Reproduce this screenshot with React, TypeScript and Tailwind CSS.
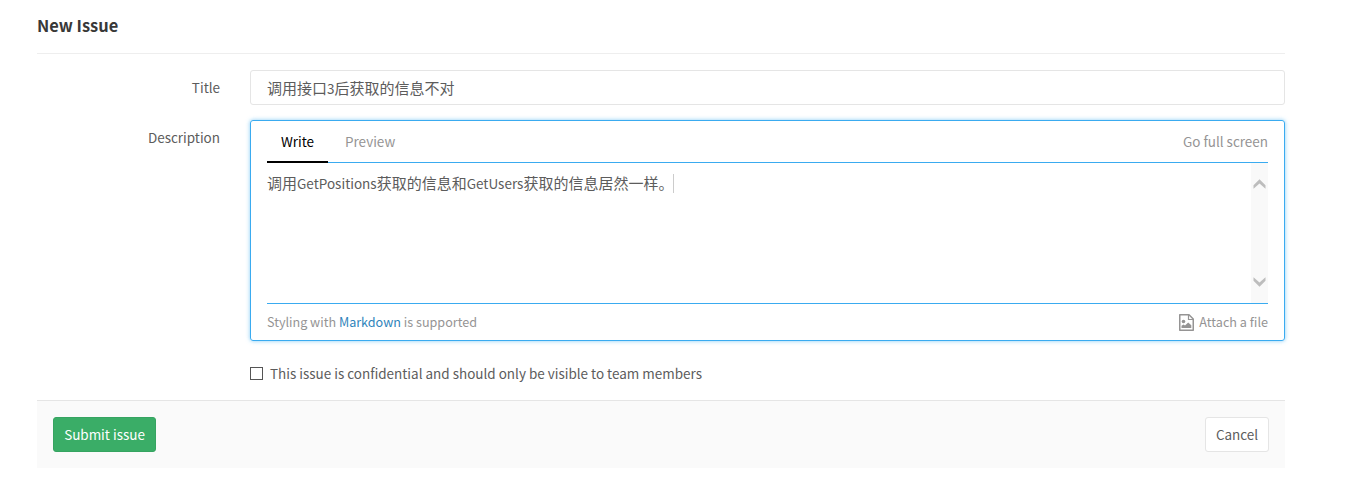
import { useState, type ReactNode } from 'react';

function Latin({ children }: { children: ReactNode }) {
  return <span className="text-[13.5px]">{children}</span>;
}

function Chevron({ down = false }: { down?: boolean }) {
  return (
    <svg width="13" height="10" viewBox="0 0 13 10" className={down ? 'rotate-180' : ''}>
      <path d="M0.5 6.3 L6.5 0.3 L12.5 6.3 V9.7 L6.5 4.6 L0.5 9.7 Z" fill="#bdbdbd" />
    </svg>
  );
}

function FileImageIcon() {
  return (
    <svg width="15" height="17" viewBox="0 0 15 17" fill="none">
      <path d="M0.75 0.75 H10 L14.25 5 V16.25 H0.75 Z" stroke="#959494" strokeWidth="1.5" strokeLinejoin="round" />
      <path d="M9.5 1 V5.5 H14" stroke="#959494" strokeWidth="1.2" />
      <circle cx="4.5" cy="7.5" r="1.8" fill="#959494" />
      <path d="M2.5 14 V11.8 L4.5 10.4 L6 11.4 L9.2 8.4 L12.3 11.3 V14 Z" fill="#959494" />
    </svg>
  );
}

export default function App() {
  const [confidential, setConfidential] = useState(false);
  return (
    <main className="h-[504px] w-[1347px] bg-white pl-[37px] font-['Noto_Sans_CJK_SC',sans-serif] text-[13.47px] leading-5 text-[#5c5c5c]">
      <form className="w-[1248px]" onSubmit={(e) => e.preventDefault()}>
        <h3 className="h-[54px] border-b border-[#eeeeee] pt-[15px] text-[16.4px] leading-5 font-bold text-[#383838]">New Issue</h3>

        <div className="mt-4 flex">
          <label className="w-[183px] pt-[7px] text-right">Title</label>
          <div className="ml-[30px] h-[35px] flex-1 rounded-[3px] border border-[#e5e5e5] px-4 text-[15px] leading-[33px]">
            调用接口<Latin>3</Latin>后获取的信息不对
          </div>
        </div>

        <div className="mt-[15px] flex">
          <label className="w-[183px] pt-[7px] text-right">Description</label>
          <div className="ml-[30px] h-[221px] flex-1 rounded-[3px] border border-[#3aabf0] px-4 shadow-[0_0_4px_rgba(58,171,240,0.6)]">
            <div className="flex h-[42px] justify-between border-b border-[#3aabf0]">
              <div className="flex">
                <button type="button" className="h-[42px] w-[61px] border-b-2 border-black text-black">Write</button>
                <button type="button" className="ml-[17px] h-[42px] pb-[2px] text-[#959494]">Preview</button>
              </div>
              <button type="button" className="h-[42px] pb-[2px] text-[#959494]">Go full screen</button>
            </div>
            <div className="flex h-[141px] justify-between border-b border-[#3aabf0]">
              <div className="flex h-5 pt-[10px] text-[15px] leading-5 whitespace-nowrap">
                <span>
                  调用<Latin>GetPositions</Latin>获取的信息和<Latin>GetUsers</Latin>获取的信息居然一样。
                </span>
                <span className="mt-px h-[19px] w-px bg-[#cccccc]" />
              </div>
              <div className="flex w-[17px] flex-col items-center justify-between bg-[#f9f9f9] pt-4 pb-4">
                <Chevron />
                <Chevron down />
              </div>
            </div>
            <div className="flex h-[36px] items-center justify-between text-[12.6px] text-[#959494]">
              <p>Styling with <a className="text-[#3084bb]">Markdown</a> is supported</p>
              <button type="button" className="flex items-center gap-[5px]">
                <FileImageIcon /><span className="text-[12.65px]">Attach a file</span>
              </button>
            </div>
          </div>
        </div>

        <label className="mt-[22px] ml-[213px] flex h-5 items-center gap-[7px]">
          <input
            type="checkbox"
            checked={confidential}
            onChange={() => setConfidential(!confidential)}
            className="size-[13px] appearance-none border border-[#555555] bg-white checked:bg-[#555555]"
          />
          This issue is confidential and should only be visible to team members
        </label>

        <div className="mt-[17px] flex h-[68px] justify-between border-t border-[#e5e5e5] bg-[#fafafa] px-4 pt-4">
          <button type="submit" className="h-[35px] w-[103px] rounded-[3px] border border-[#36a461] bg-[#3aad67] pb-[2px] text-white">Submit issue</button>
          <button type="button" className="h-[35px] w-[64px] rounded-[3px] border border-[#e5e5e5] bg-white pb-[2px]">Cancel</button>
        </div>
      </form>
    </main>
  );
}
